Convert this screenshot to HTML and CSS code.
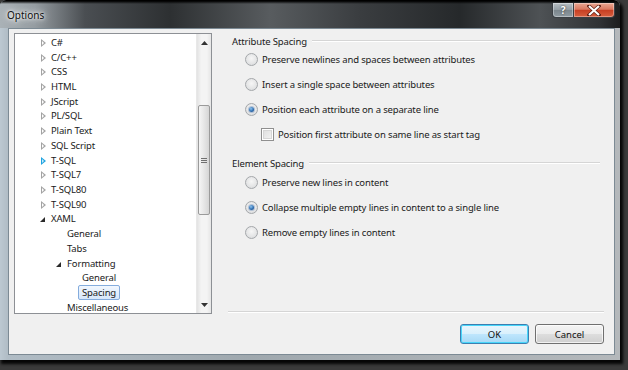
FILE: index.html
```html
<!DOCTYPE html>
<html lang="en">
<head>
    <meta charset="UTF-8">
    <title>Options</title>
    <link rel="stylesheet" href="styles.css">
</head>
<body>
    <div class="window">
        <div class="titlebar">
            <span class="title">Options</span>
            <div class="caption">
                <span class="cap-btn help">?</span>
                <span class="cap-btn close">
                    <svg width="14" height="11" viewBox="0 0 14 11"><path d="M2 1 L12 10 M12 1 L2 10" stroke="#5a1a10" stroke-width="3.4" stroke-linecap="square"/><path d="M2 1 L12 10 M12 1 L2 10" stroke="#fff" stroke-width="2.2"/></svg>
                </span>
            </div>
        </div>

        <div class="client">
            <div class="tree">
                <ul class="tree-items">
                    <li class="node l1"><i class="arrow closed"></i>C#</li>
                    <li class="node l1"><i class="arrow closed"></i>C/C++</li>
                    <li class="node l1"><i class="arrow closed"></i>CSS</li>
                    <li class="node l1"><i class="arrow closed"></i>HTML</li>
                    <li class="node l1"><i class="arrow closed"></i>JScript</li>
                    <li class="node l1"><i class="arrow closed"></i>PL/SQL</li>
                    <li class="node l1"><i class="arrow closed"></i>Plain Text</li>
                    <li class="node l1"><i class="arrow closed"></i>SQL Script</li>
                    <li class="node l1"><i class="arrow closed hot"></i>T-SQL</li>
                    <li class="node l1"><i class="arrow closed"></i>T-SQL7</li>
                    <li class="node l1"><i class="arrow closed"></i>T-SQL80</li>
                    <li class="node l1"><i class="arrow closed"></i>T-SQL90</li>
                    <li class="node l1"><i class="arrow open"></i>XAML</li>
                    <li class="node l2"><i class="arrow"></i>General</li>
                    <li class="node l2"><i class="arrow"></i>Tabs</li>
                    <li class="node l2"><i class="arrow open"></i>Formatting</li>
                    <li class="node l3"><i class="arrow"></i>General</li>
                    <li class="node l3"><i class="arrow"></i><span class="selected">Spacing</span></li>
                    <li class="node l2"><i class="arrow"></i>Miscellaneous</li>
                </ul>
                <div class="scrollbar">
                    <div class="sb-btn"><svg width="7" height="4" viewBox="0 0 7 4"><path d="M0 4 L3.5 0 L7 4 Z" fill="#333"/></svg></div>
                    <div class="sb-track">
                        <div class="sb-thumb"><span class="grip"></span></div>
                    </div>
                    <div class="sb-btn"><svg width="7" height="4" viewBox="0 0 7 4"><path d="M0 0 L7 0 L3.5 4 Z" fill="#333"/></svg></div>
                </div>
            </div>

            <div class="pane">
                <div class="settings">
                    <div class="group">
                        <div class="group-title"><span>Attribute Spacing</span><i class="rule"></i></div>
                        <div class="options">
                            <div class="option"><i class="radio"></i>Preserve newlines and spaces between attributes</div>
                            <div class="option"><i class="radio"></i>Insert a single space between attributes</div>
                            <div class="option"><i class="radio checked"></i>Position each attribute on a separate line</div>
                            <div class="option sub"><i class="check"></i>Position first attribute on same line as start tag</div>
                        </div>
                    </div>
                    <div class="group second">
                        <div class="group-title"><span>Element Spacing</span><i class="rule"></i></div>
                        <div class="options">
                            <div class="option"><i class="radio"></i>Preserve new lines in content</div>
                            <div class="option"><i class="radio checked"></i>Collapse multiple empty lines in content to a single line</div>
                            <div class="option"><i class="radio"></i>Remove empty lines in content</div>
                        </div>
                    </div>
                </div>
                <div class="buttons">
                    <button class="btn default">OK</button>
                    <button class="btn">Cancel</button>
                </div>
            </div>
        </div>
    </div>
</body>
</html>
```

FILE: styles.css
```css
:root {
    --face: #f0f0f0;
    --text: #1a1a1a;
    --rule: #d5d5d5;
}
body {
    margin: 0;
    width: 628px;
    height: 370px;
    overflow: hidden;
    background: #3a3a3a;
    font-family: 'Noto Sans', sans-serif;
    font-size: 9.5px;
    letter-spacing: -0.15px;
    color: var(--text);
}
.window {
    width: 620px;
    height: 360px;
    display: flex;
    flex-direction: column;
    border-radius: 6px 6px 0 0;
    background: linear-gradient(to right, #bcc8d1 0, #b0bcc5 8px, #9fa8ae 40%, #b4b8bb 100%);
    box-shadow: 2px 3px 3px 1px #050505;
}
.titlebar {
    height: 28px;
    display: flex;
    justify-content: space-between;
    border-radius: 6px 6px 0 0;
    background:
        linear-gradient(to bottom, #000 0, #000 1px, rgba(0, 0, 0, 0) 4px),
        linear-gradient(to right, #aab2b7 0, #959ca1 35px, #4a4e52 85px, #2d3032 170px, #585c5f 270px, #3a3d40 360px, #26292b 460px, #4e5255 540px, #2f3235 600px, #1c1d1e 620px);
}
.title {
    padding: 8px 0 0 7px;
    font-size: 10px;
    letter-spacing: 0;
    color: #101010;
    text-shadow: 0 0 6px #fff, 0 0 3px #fff, 0 0 10px rgba(255, 255, 255, 0.7);
}
.caption {
    display: flex;
    margin: 3px 5px 0 0;
    height: 16px;
}
.cap-btn {
    display: flex;
    align-items: center;
    justify-content: center;
    height: 14px;
    border: 1px solid #3a3f44;
    border-top: none;
    box-shadow: inset 0 0 0 1px rgba(255, 255, 255, 0.35);
}
.help {
    width: 20px;
    border-radius: 0 0 0 4px;
    background: linear-gradient(to bottom, #b8c0c5 0, #939da4 50%, #7b868d 51%, #8f9aa1 100%);
    color: #fff;
    font-weight: bold;
    font-size: 10px;
    text-shadow: 0 0 2px #222;
}
.close {
    width: 40px;
    border-left: none;
    border-radius: 0 0 4px 0;
    background: linear-gradient(to bottom, #eaa893 0, #da7860 45%, #c73f23 52%, #d65e3e 100%);
}
.client {
    flex: 1;
    margin: 0 5px 5px 8px;
    display: flex;
    padding: 4px 10px 0 5px;
    background: var(--face);
    border: 1px solid #7c8a94;
}

/* tree */
.tree {
    width: 198px;
    height: 281px;
    box-sizing: border-box;
    display: flex;
    background: #fff;
    border: 1px solid #8d9095;
}
.tree-items {
    flex: 1;
    list-style: none;
    margin: 0;
    padding: 1px 0 0 0;
}
.node {
    height: 14.72px;
    display: flex;
    align-items: center;
    white-space: nowrap;
}
.l1 { padding-left: 23px; }
.l2 { padding-left: 39px; }
.l3 { padding-left: 54px; }
.arrow {
    width: 9px;
    height: 9px;
    margin-right: 4px;
    flex: none;
    position: relative;
}
.arrow.closed::before {
    content: '';
    position: absolute;
    left: 3px;
    top: 1px;
    border-style: solid;
    border-width: 4px 0 4px 5px;
    border-color: transparent transparent transparent #a3a3a3;
}
.arrow.closed::after {
    content: '';
    position: absolute;
    left: 4px;
    top: 3px;
    border-style: solid;
    border-width: 2px 0 2px 2.5px;
    border-color: transparent transparent transparent #fff;
}
.arrow.closed.hot::before {
    border-left-color: #1fa3e0;
}
.arrow.closed.hot::after {
    border-left-color: #c9ecfa;
}
.arrow.open::before {
    content: '';
    position: absolute;
    left: 2px;
    top: 3px;
    border-style: solid;
    border-width: 0 0 5px 5px;
    border-color: transparent transparent #2a2a2a transparent;
}
.selected {
    margin-left: -4px;
    padding: 0 3px;
    line-height: 13px;
    border: 1px solid #84acdd;
    border-radius: 2px;
    background: linear-gradient(to bottom, #f1f7fe, #d6e7fb);
}
.scrollbar {
    width: 14px;
    display: flex;
    flex-direction: column;
    background: linear-gradient(to right, #e3e3e3, #f4f4f4 30%, #f4f4f4 70%, #e6e6e6);
    border-left: 1px solid #e8e8e8;
}
.sb-btn {
    height: 17px;
    display: flex;
    align-items: center;
    justify-content: center;
}
.sb-track {
    flex: 1;
}
.sb-thumb {
    margin: 54px 1px 0 1px;
    height: 108px;
    display: flex;
    align-items: center;
    justify-content: center;
    border: 1px solid #9a9a9a;
    border-radius: 2px;
    background: linear-gradient(to right, #f5f5f5, #e6e6e6 50%, #d5d5d5);
}
.grip {
    width: 6px;
    height: 5px;
    background: repeating-linear-gradient(to bottom, #6f6f6f 0, #6f6f6f 1px, transparent 1px, transparent 2px);
}

/* settings pane */
.pane {
    width: 376px;
    margin-left: 16px;
    display: flex;
    flex-direction: column;
}
.settings {
    height: 279px;
    box-sizing: border-box;
    padding: 0 4px;
    border-bottom: 1px solid var(--rule);
    box-shadow: 0 1px 0 #fff;
}
.group-title {
    height: 16px;
    display: flex;
    align-items: center;
}
.rule {
    flex: 1;
    height: 1px;
    margin: 0 0 1px 5px;
    background: var(--rule);
    box-shadow: 0 1px 0 #fff;
}
.options {
    display: flex;
    flex-direction: column;
    gap: 9px;
    margin-top: 2px;
}
.second {
    margin-top: 13px;
}
.second .options {
    margin-top: 3px;
}
.option {
    height: 16px;
    display: flex;
    align-items: center;
    padding-left: 13px;
    white-space: nowrap;
}
.option.sub {
    padding-left: 29px;
}
.radio {
    width: 11px;
    height: 11px;
    margin-right: 4px;
    border-radius: 50%;
    border: 1px solid #a4a7aa;
    background: radial-gradient(circle at 50% 40%, #f6f6f6 0, #e2e3e4 65%, #cfd2d5 100%);
    display: flex;
    align-items: center;
    justify-content: center;
}
.radio.checked::after {
    content: '';
    width: 5px;
    height: 5px;
    border-radius: 50%;
    background: radial-gradient(circle at 40% 35%, #8fc4ee 0, #2f6fb2 55%, #173f78 100%);
    box-shadow: 0 0 0 1px rgba(120, 150, 190, 0.5);
}
.check {
    width: 11px;
    height: 11px;
    margin-right: 4px;
    border: 1px solid #8f8f8f;
    background: linear-gradient(135deg, #dcdcdc, #f6f6f6);
    box-shadow: inset 0 0 0 1px #fff, inset 0 0 0 2px #d6d6d6;
}
.buttons {
    display: flex;
    justify-content: flex-end;
    gap: 6px;
    margin-top: 12px;
}
.btn {
    width: 69px;
    height: 20px;
    padding: 0;
    font-family: inherit;
    font-size: 9.5px;
    letter-spacing: 0;
    color: #111;
    border: 1px solid #707070;
    border-radius: 3px;
    background: linear-gradient(to bottom, #f4f4f4 0, #ebebeb 50%, #dddddd 51%, #cfcfcf 100%);
    box-shadow: inset 0 0 0 1px rgba(255, 255, 255, 0.7);
}
.btn.default {
    border-color: #3c7fb1;
    background: linear-gradient(to bottom, #eaf6fd 0, #d9f0fc 50%, #bee6fd 51%, #a7d9f5 100%);
    box-shadow: inset 0 0 0 1px #48d6fa;
}
```
